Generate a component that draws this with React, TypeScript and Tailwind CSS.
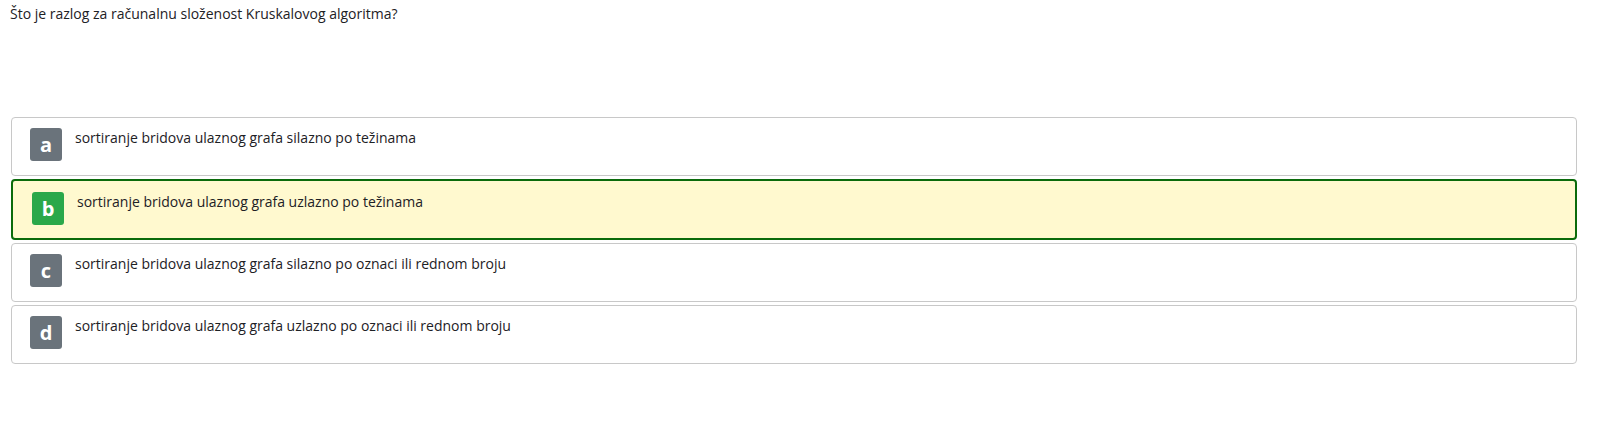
import React from "react";

type Option = { key: string; text: string; selected?: boolean };

const options: Option[] = [
  { key: "a", text: "sortiranje bridova ulaznog grafa silazno po težinama" },
  { key: "b", text: "sortiranje bridova ulaznog grafa uzlazno po težinama", selected: true },
  { key: "c", text: "sortiranje bridova ulaznog grafa silazno po oznaci ili rednom broju" },
  { key: "d", text: "sortiranje bridova ulaznog grafa uzlazno po oznaci ili rednom broju" },
];

const AnswerRow = ({ option }: { option: Option }) => {
  const box = option.selected
    ? "h-[61px] border-2 border-[#0b6b0b] bg-[#fff9cf] pl-[19px] pt-[11px]"
    : "h-[59px] border border-[#c8c8c8] bg-white pl-[18px] pt-[10px]";
  const badge = option.selected ? "bg-[#2aa84a]" : "bg-[#6a737b]";

  return (
    <div className={`flex items-start rounded-[4px] ${box}`}>
      <div
        className={`flex h-[33px] w-[32px] shrink-0 items-center justify-center rounded-[3px] text-[20px] font-bold text-white ${badge}`}
      >
        {option.key}
      </div>
      <div className="ml-[13px] text-[14px] leading-[20px]">{option.text}</div>
    </div>
  );
};

const App = () => {
  return (
    <div className="min-h-[437px] bg-white font-['Open_Sans','Liberation_Sans',sans-serif] text-[#1d2125]">
      <div className="pl-[10px] pt-[4px] text-[14px] leading-[20px]">
        Što je razlog za računalnu složenost Kruskalovog algoritma?
      </div>

      <div className="ml-[11px] mr-[40px] mt-[93px] flex flex-col gap-[3px]">
        {options.map((o) => (
          <AnswerRow key={o.key} option={o} />
        ))}
      </div>
    </div>
  );
};

export default App;
